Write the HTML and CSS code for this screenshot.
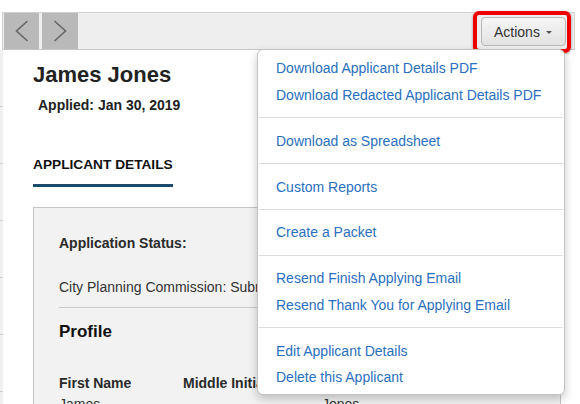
FILE: index.html
```html
<!DOCTYPE html>
<html>
<head>
<meta charset="utf-8">
<link rel="stylesheet" href="styles.css">
</head>
<body>
<div class="page">
  <header class="toolbar">
    <button class="nav nav-prev" aria-label="Previous">
      <svg width="14" height="22" viewBox="0 0 14 22"><polyline points="12.5,1 1.5,11 12.5,21" fill="none" stroke="#666" stroke-width="1.6"/></svg>
    </button>
    <button class="nav nav-next" aria-label="Next">
      <svg width="14" height="22" viewBox="0 0 14 22"><polyline points="1.5,1 12.5,11 1.5,21" fill="none" stroke="#666" stroke-width="1.6"/></svg>
    </button>
    <div class="spacer"></div>
    <div class="actions">
      <button class="actions-btn">Actions<span class="caret"></span></button>
      <span class="highlight"></span>
      <ul class="menu">
        <li><a href="#">Download Applicant Details PDF</a></li>
        <li><a href="#">Download Redacted Applicant Details PDF</a></li>
        <li class="divider"></li>
        <li><a href="#">Download as Spreadsheet</a></li>
        <li class="divider"></li>
        <li><a href="#">Custom Reports</a></li>
        <li class="divider"></li>
        <li><a href="#">Create a Packet</a></li>
        <li class="divider"></li>
        <li><a href="#">Resend Finish Applying Email</a></li>
        <li><a href="#">Resend Thank You for Applying Email</a></li>
        <li class="divider"></li>
        <li><a href="#">Edit Applicant Details</a></li>
        <li><a href="#">Delete this Applicant</a></li>
      </ul>
    </div>
  </header>
  <div class="main">
    <aside class="rail">
      <div class="rail-row"></div>
      <div class="rail-row"></div>
      <div class="rail-row"></div>
      <div class="rail-row"></div>
      <div class="rail-row"></div>
      <div class="rail-row"></div>
    </aside>
    <section class="content">
      <h1 class="name">James Jones</h1>
      <div class="applied">Applied: Jan 30, 2019</div>
      <div class="tabs"><span class="tab">APPLICANT DETAILS</span></div>
      <div class="panel">
        <div class="status-label">Application Status:</div>
        <div class="status-value">City Planning Commission: Submitted</div>
        <hr class="sep">
        <h2 class="section-title">Profile</h2>
        <div class="fields">
          <div class="field">
            <div class="field-label">First Name</div>
            <div class="field-value">James</div>
          </div>
          <div class="field">
            <div class="field-label">Middle Initial</div>
            <div class="field-value"></div>
          </div>
          <div class="field">
            <div class="field-label">Last Name</div>
            <div class="field-value">Jones</div>
          </div>
        </div>
      </div>
    </section>
  </div>
</div>
</body>
</html>
```
FILE: styles.css
```css
html, body {
  margin: 0;
  padding: 0;
}
body {
  width: 580px;
  height: 404px;
  overflow: hidden;
  background: #fff;
  font-family: "Liberation Sans", Arial, Helvetica, sans-serif;
  color: #222;
}
.page {
  padding-top: 12px;
}
.toolbar {
  box-sizing: border-box;
  display: flex;
  align-items: flex-start;
  width: 573px;
  height: 38px;
  margin-left: 2px;
  padding-left: 1px;
  background: #eeeeee;
  border-top: 1px solid #d2d2d2;
  border-bottom: 1px solid #c8c8c8;
  border-left: 1px solid #cfcfcf;
  border-right: 1px solid #d6d6d6;
  position: relative;
  z-index: 5;
}
.nav {
  width: 35px;
  height: 36px;
  margin: 0;
  padding: 0;
  border: 0;
  background: #b9b9b9;
  display: flex;
  align-items: center;
  justify-content: center;
}
.nav-next {
  width: 36px;
  margin-left: 3px;
}
.nav svg {
  display: block;
}
.spacer {
  flex: 1;
}
.actions {
  position: relative;
  margin-top: 4px;
  margin-right: 8px;
}
.actions-btn {
  box-sizing: border-box;
  display: flex;
  align-items: center;
  height: 29px;
  width: 85px;
  padding: 0 0 0 12px;
  margin: 0;
  border: 1px solid #b9b9b9;
  border-radius: 4px;
  background: linear-gradient(#f6f6f6, #e2e2e2);
  font-family: "Liberation Sans", Arial, Helvetica, sans-serif;
  font-size: 14px;
  color: #333;
}
.caret {
  display: inline-block;
  width: 0;
  height: 0;
  margin-left: 6px;
  margin-top: 1px;
  border-top: 3.5px solid #555;
  border-left: 3.5px solid transparent;
  border-right: 3.5px solid transparent;
}
.highlight {
  position: absolute;
  top: -6px;
  right: -5px;
  bottom: -7px;
  left: -8px;
  border: 4px solid #ee0000;
  border-radius: 6px;
  box-shadow: 0 1px 3px rgba(0, 0, 0, 0.35);
  pointer-events: none;
}
.menu {
  position: absolute;
  top: 32px;
  right: 1px;
  box-sizing: border-box;
  width: 308px;
  margin: 0;
  padding: 5px 0 4px;
  list-style: none;
  background: #fff;
  border: 1px solid #c4c4c4;
  border-radius: 6px;
  box-shadow: 0 4px 10px rgba(0, 0, 0, 0.22);
  z-index: 10;
}
.menu a {
  display: block;
  padding: 3.2px 18px;
  line-height: 20px;
  font-size: 14px;
  color: #2a6fc0;
  text-decoration: none;
  white-space: nowrap;
}
.menu .divider {
  height: 1px;
  margin: 9.3px 1px;
  background: #dcdcdc;
}
.main {
  display: flex;
  align-items: flex-start;
}
.rail {
  width: 3px;
  flex: none;
  background: #f0f0f0;
  height: 360px;
}
.rail-row {
  height: 56px;
  border-bottom: 1px solid #d0d0d0;
}
.content {
  flex: 1;
  padding-left: 30px;
  padding-right: 19px;
}
.name {
  margin: 12px 0 0;
  font-size: 22px;
  line-height: 26px;
  font-weight: bold;
  color: #222;
}
.applied {
  margin-top: 8px;
  padding-left: 5px;
  font-size: 14px;
  line-height: 18px;
  font-weight: bold;
  color: #222;
}
.tabs {
  margin-top: 41px;
}
.tab {
  display: inline-block;
  padding-bottom: 10px;
  border-bottom: 3px solid #1b4b6c;
  font-size: 13.7px;
  line-height: 18px;
  font-weight: bold;
  color: #111;
}
.panel {
  margin-top: 20px;
  height: 240px;
  padding: 26px 25px 0;
  background: #f2f2f2;
  border: 1px solid #c6c6c6;
}
.status-label {
  font-size: 14px;
  line-height: 18px;
  font-weight: bold;
  color: #2a2a2a;
}
.status-value {
  margin-top: 26px;
  font-size: 14px;
  line-height: 18px;
  color: #333;
  white-space: nowrap;
}
.sep {
  margin: 11px 0 0;
  border: 0;
  height: 1px;
  background: #c8c8c8;
}
.section-title {
  margin: 13px 0 0;
  font-size: 17px;
  line-height: 22px;
  font-weight: bold;
  color: #111;
}
.fields {
  margin-top: 31px;
  display: grid;
  grid-template-columns: 124px 139px 1fr;
}
.field-label {
  font-size: 14px;
  line-height: 18px;
  font-weight: bold;
  color: #2a2a2a;
  white-space: nowrap;
}
.field-value {
  margin-top: 3px;
  font-size: 14px;
  line-height: 18px;
  color: #333;
  min-height: 18px;
}
```
